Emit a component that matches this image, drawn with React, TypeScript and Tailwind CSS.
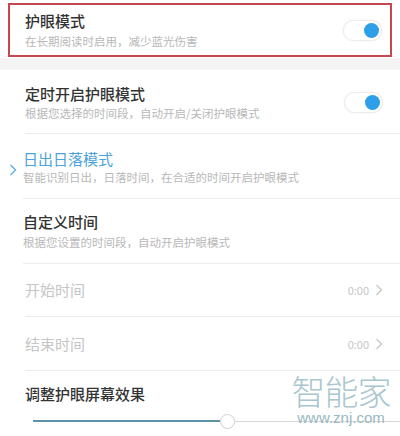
import React from "react";

const font = { fontFamily: '"Noto Sans CJK SC", "Noto Sans", sans-serif' };

function Toggle() {
  return (
    <div className="relative w-[39px] h-[21px] rounded-full bg-white border border-[#ececec] shadow-[0_0_2px_rgba(0,0,0,0.08)]">
      <div className="absolute right-[2px] top-[2px] w-[15px] h-[15px] rounded-full bg-[#2d9fe8]" />
    </div>
  );
}

function Chevron({ className }: { className?: string }) {
  return (
    <svg width="8" height="12" viewBox="0 0 8 12" className={className}>
      <path d="M1.5 1 L6.5 6 L1.5 11" fill="none" stroke="currentColor" strokeWidth="1.3" />
    </svg>
  );
}

export default function App() {
  return (
    <div className="relative w-[400px] h-[436px] bg-white overflow-hidden" style={font}>
      {/* Row 1 highlighted */}
      <div className="pt-[3px] pb-[1px] px-[8px] bg-white">
        <div className="h-[54px] border-2 border-[#c4474f] flex items-center pl-[15px] pr-[8px]">
          <div className="flex-1 flex flex-col">
            <div className="text-[15px] leading-[20px] text-[#333] font-medium">护眼模式</div>
            <div className="mt-[2px] text-[11.5px] leading-[16px] text-[#b8b8b8]">在长期阅读时启用，减少蓝光伤害</div>
          </div>
          <Toggle />
        </div>
      </div>
      <div className="h-[12px] bg-[#f4f4f4]" />

      {/* Row 2 */}
      <div className="ml-[25px] h-[64px] border-b border-[#ececec] flex items-center pr-[17px]">
        <div className="flex-1 flex flex-col pt-[2px]">
          <div className="text-[15px] leading-[20px] text-[#333] font-medium">定时开启护眼模式</div>
          <div className="mt-[1px] text-[11.5px] leading-[16px] text-[#b8b8b8]">根据您选择的时间段，自动开启/关闭护眼模式</div>
        </div>
        <div className="mt-[2px]">
          <Toggle />
        </div>
      </div>

      {/* Row 3 */}
      <div className="relative ml-[23px] h-[65px] border-b border-[#ececec] flex flex-col pt-[15px]">
        <Chevron className="absolute left-[-14px] top-[30px] text-[#5aaedf]" />
        <div className="text-[15px] leading-[20px] text-[#4aa3da]">日出日落模式</div>
        <div className="text-[11.5px] leading-[16px] text-[#b8b8b8]">智能识别日出，日落时间，在合适的时间开启护眼模式</div>
      </div>

      {/* Row 4 */}
      <div className="ml-[23px] h-[65px] border-b border-[#ececec] flex flex-col pt-[13px]">
        <div className="text-[15px] leading-[20px] text-[#333] font-medium">自定义时间</div>
        <div className="mt-[2px] text-[11.5px] leading-[16px] text-[#b8b8b8]">根据您设置的时间段，自动开启护眼模式</div>
      </div>

      {/* Row 5 */}
      <div className="ml-[25px] h-[53px] border-b border-[#ececec] flex items-center pr-[17px]">
        <div className="flex-1 text-[15px] leading-[20px] text-[#c6c6c6]">开始时间</div>
        <div className="flex items-center gap-[6px] text-[#c6c6c6]">
          <span className="text-[11px] leading-[14px]">0:00</span>
          <Chevron />
        </div>
      </div>

      {/* Row 6 */}
      <div className="ml-[25px] h-[54px] border-b border-[#ececec] flex items-center pr-[17px]">
        <div className="flex-1 text-[15px] leading-[20px] text-[#c6c6c6]">结束时间</div>
        <div className="flex items-center gap-[6px] text-[#c6c6c6]">
          <span className="text-[11px] leading-[14px]">0:00</span>
          <Chevron />
        </div>
      </div>

      {/* Row 7 */}
      <div className="ml-[25px] pt-[13px]">
        <div className="text-[15px] leading-[20px] text-[#333] font-medium">调整护眼屏幕效果</div>
        <div className="relative mt-[10px] ml-[8px] h-[14px] flex items-center">
          <div className="h-[2px] w-[187px] bg-[#5b93a5]" />
          <div className="w-[15px] h-[15px] rounded-full bg-white border border-[#cfcfcf] shrink-0" />
          <div className="h-[1px] flex-1 bg-[#d6d6d6]" />
        </div>
      </div>

      {/* Watermark */}
      <div className="absolute left-[288px] top-[372px] w-[106px] flex flex-col items-center pointer-events-none">
        <div className="text-[34px] leading-[38px] text-[#a9c6cf] font-light tracking-[-1px]">智能家</div>
        <div className="text-[15px] leading-[16px] text-[#98b8c2]" style={{ fontFamily: '"Liberation Sans", Arial, sans-serif' }}>www.znj.com</div>
      </div>
    </div>
  );
}
